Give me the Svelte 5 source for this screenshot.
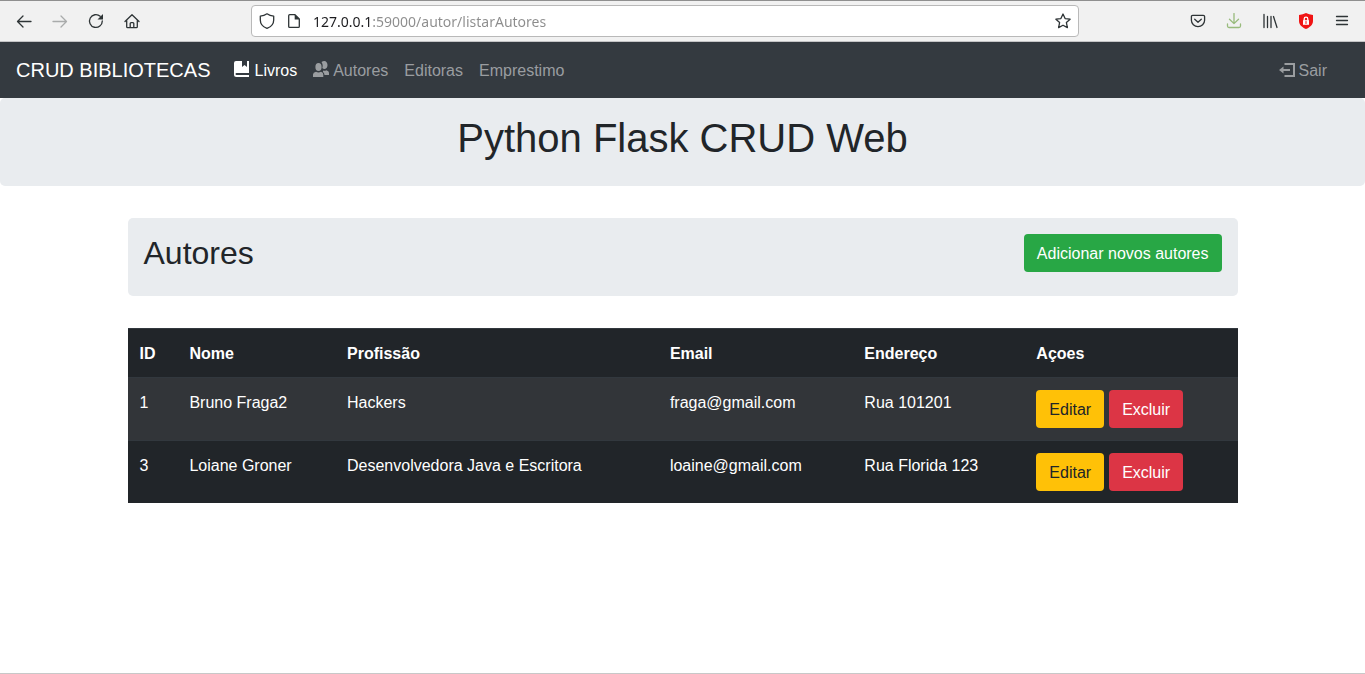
<script>
  const authors = [
    { id: 1, name: 'Bruno Fraga2', job: 'Hackers', email: 'fraga@gmail.com', address: 'Rua 101201' },
    { id: 3, name: 'Loiane Groner', job: 'Desenvolvedora Java e Escritora', email: 'loaine@gmail.com', address: 'Rua Florida 123' }
  ];
  const columns = ['ID', 'Nome', 'Profissão', 'Email', 'Endereço', 'Açoes'];
  let url = $state('127.0.0.1:59000/autor/listarAutores');
</script>

<div class="window">
  <header class="toolbar">
    <div class="tools">
      <button aria-label="Back"><svg viewBox="0 0 16 16"><path d="M15 8.5H2M7 3 1.5 8.5 7 14" /></svg></button>
      <button class="disabled" aria-label="Forward" disabled><svg viewBox="0 0 16 16"><path d="M1 8.5h13M9 3l5.500 5.500L9 14" /></svg></button>
      <button aria-label="Reload"><svg viewBox="0 0 16 16"><path d="M14.300 8a6.400 6.400 0 1 1-2.100-4.700" /><path class="solid" d="M15 1v5.500H9.500z" /></svg></button>
      <button aria-label="Home"><svg viewBox="0 0 16 16"><path d="M1 8.500 8 1.700l7 6.800M2.700 7.500v6.300q0 .9.900.9h8.800q.9 0 .9-.9V7.500M6.200 14.500v-4q0-.9.900-.9h1.800q.9 0 .9.900v4" /></svg></button>
    </div>
    <div class="address">
      <svg viewBox="0 0 16 16"><path d="M8 .8C10 2.200 12.200 2.900 14.700 3.100V7c0 3.800-2.700 6.900-6.700 8.400C4 13.900 1.300 10.800 1.300 7V3.100C3.800 2.900 6 2.200 8 .8z" /></svg>
      <svg viewBox="0 0 16 16"><path d="M4 1.700h5L13.300 6v7.400q0 1-1 1H3.700q-1 0-1-1V2.700q0-1 1-1z" /><path class="solid" d="M8.700 1.500v5h5z" /></svg>
      <input aria-label="Address" type="text" spellcheck="false" bind:value={url} />
      <button aria-label="Bookmark"><svg viewBox="0 0 16 16"><path d="m8 1 2.100 4.600 5 .6-3.700 3.400 1 5L8 12.200l-4.400 2.400 1-5L.9 6.200l5-.6z" /></svg></button>
    </div>
    <div class="tools">
      <button aria-label="Pocket"><svg viewBox="0 0 16 16"><path d="M2.700 2.300h10.600q1.300 0 1.300 1.300v3.700a6.600 6.300 0 0 1-13.200 0V3.600q0-1.300 1.300-1.300zM4.700 6.300 8 9.300l3.300-3" /></svg></button>
      <button class="download" aria-label="Downloads"><svg viewBox="0 0 16 16"><path d="M8 .5v10M3.500 6.300 8 10.600l4.500-4.300M1.500 11v2q0 1.500 1.500 1.500h10q1.500 0 1.500-1.500v-2" /></svg></button>
      <button aria-label="Library"><svg viewBox="0 0 16 16"><path d="M2 1.500v13M5.500 3.500v11M9 3.500v11M11.500 3.500l3.500 11" /></svg></button>
      <button aria-label="Protection"><svg viewBox="0 0 16 16"><path class="shield" d="M8 0q3 1.700 7 2v6c0 4-3.500 6.500-7 8-3.500-1.500-7-4-7-8V2q4-.3 7-2z" /><path class="lock" d="M5 7.200h6v4.600H5z" /><path class="shackle" d="M6.200 7.500V6a1.800 1.800 0 0 1 3.600 0v1.500" /><path class="keyhole" d="M8 8.500v2" /></svg></button>
      <button aria-label="Menu"><svg viewBox="0 0 16 16"><path d="M2.500 3.500h11M2.500 7.500h11M2.500 11.500h11" /></svg></button>
    </div>
  </header>

  <nav>
    <a class="brand" href="#inicio">CRUD BIBLIOTECAS</a>
    <div class="links">
      <a class="active" href="#livros"><svg viewBox="0 0 16 16"><path d="M2 0h6v6l2.500-2L13 6V0h2v12H2.500a1 1 0 0 0 0 2H15v2H2.500Q0 16 0 13.500V2q0-2 2-2z" /></svg>Livros</a>
      <a href="#autores"><svg viewBox="0 0 16 16"><ellipse cx="5.500" cy="6" rx="3.100" ry="4" /><path d="M0 16v-2.500q0-2 3-2.800 2.500 1.600 5 0 2.300.8 2.300 2.800V16zM8.500 1C12-1.200 14.500 1 14.500 4c0 2-1 3.800-2.700 4.100-1 .1-1.900-.3-2.500-1 .7-2.500.4-4.600-.8-6.100zM10 9.500q1.800.6 3.300-.3 2.700.7 2.700 2.500V14h-4.500q-.1-2.200-1.500-3z" /></svg>Autores</a>
      <a href="#editoras">Editoras</a>
      <a href="#emprestimo">Emprestimo</a>
    </div>
    <a class="exit" href="#sair"><svg viewBox="0 0 16 16"><path d="M5.500 1H16v14H5.500v-2H14V3H5.500zM0 8l4.500-3.500V7H11v2H4.500v2.500z" /></svg>Sair</a>
  </nav>

  <div class="panel banner"><h1>Python Flask CRUD Web</h1></div>

  <main>
    <div class="panel heading">
      <h2>Autores</h2>
      <button class="btn add">Adicionar novos autores</button>
    </div>
    <table>
      <thead>
        <tr>{#each columns as column}<th scope="col">{column}</th>{/each}</tr>
      </thead>
      <tbody>
        {#each authors as author (author.id)}
          <tr>
            <td>{author.id}</td>
            <td>{author.name}</td>
            <td>{author.job}</td>
            <td>{author.email}</td>
            <td>{author.address}</td>
            <td class="last"><div class="actions"><button class="btn edit">Editar</button><button class="btn remove">Excluir</button></div></td>
          </tr>
        {/each}
      </tbody>
    </table>
  </main>
</div>

<style>
  :global(body) { margin: 0; }
  .window, .window * { box-sizing: border-box; }
  .window {
    display: flex;
    flex-direction: column;
    min-height: 100vh;
    border-bottom: 1px solid #c8c8c8;
    background: #fff;
    color: #212529;
    font: 16px/24px "Liberation Sans", Arial, sans-serif;
  }
  button { font: inherit; cursor: pointer; }
  svg { width: 16px; height: 16px; flex: none; }

  .toolbar {
    display: flex;
    align-items: center;
    height: 42px;
    padding: 0 5px 0 6px;
    border-top: 1px solid #8f8f8f;
    border-bottom: 1px solid #c4c4c6;
    background: #f1f1f1;
  }
  .toolbar svg { display: block; fill: none; stroke: #2e3436; stroke-width: 1.3; stroke-linejoin: round; stroke-linecap: round; }
  .toolbar button { display: grid; place-items: center; width: 36px; height: 32px; padding: 0; border: 0; background: none; }
  .toolbar .solid { fill: #2e3436; stroke: none; }
  .toolbar .disabled svg { stroke: #a9abab; }
  .toolbar .download svg { stroke: #98bb7c; }
  .toolbar .shield { fill: #f01414; stroke: none; }
  .toolbar .lock { fill: #fff; stroke: none; }
  .toolbar .shackle { stroke: #fff; }
  .toolbar .keyhole { stroke: #f01414; stroke-width: 1; }
  .tools { display: flex; }
  .address {
    display: flex;
    flex: 1;
    align-items: center;
    gap: 11px;
    min-width: 0;
    height: 32px;
    margin: 0 101px;
    padding-left: 7px;
    border: 1px solid #b9b9b9;
    border-radius: 4px;
    background: #fff;
  }
  .address button { width: 30px; height: 30px; }
  .address input {
    flex: 1;
    min-width: 0;
    padding: 2px 0 0;
    border: 0;
    outline: 0;
    background: linear-gradient(to right, #1c1c1f 57px, #8c8c8c 57px);
    background-clip: text;
    -webkit-background-clip: text;
    color: transparent;
    font: 14px/20px "Noto Sans", sans-serif;
  }

  nav { display: flex; align-items: center; height: 56px; padding: 0 30px 0 16px; background: #343a40; }
  nav a { display: flex; align-items: center; gap: 4px; padding: 9px 8px 7px; color: #9a9da0; text-decoration: none; }
  nav svg { margin-bottom: 4px; fill: currentColor; }
  nav .brand { margin-right: 16px; padding: 0; color: #fff; font-size: 20px; line-height: 30px; }
  nav .active { color: #fff; }
  nav .exit svg { margin-bottom: 2px; }
  .links { display: flex; flex: 1; }

  .panel { margin-bottom: 32px; padding: 16px; border-radius: 5px; background: #e9ecef; }
  h1, h2 { margin: 0 0 8px; font-weight: 400; }
  h1 { font-size: 40px; line-height: 48px; text-align: center; }
  h2 { font-size: 32px; line-height: 38px; }
  main { width: 100%; max-width: 1140px; margin: 0 auto; padding: 0 15px; }
  .heading { display: flex; align-items: flex-start; justify-content: space-between; }
  .btn { padding: 7px 12px 5px; border: 1px solid transparent; border-radius: 4px; color: #fff; }
  .add { background: #28a745; }
  .edit { background: #ffc107; color: #212529; }
  .remove { background: #dc3545; }
  .actions { display: flex; gap: 5px; }

  table { width: 100%; border-collapse: collapse; background: #212529; color: #fff; }
  th, td { padding: 13px 12px 11px; border-top: 1px solid #32383e; text-align: left; vertical-align: top; }
  .last { padding: 12px; }
  tbody tr:nth-child(odd) { background: #323539; }
</style>
